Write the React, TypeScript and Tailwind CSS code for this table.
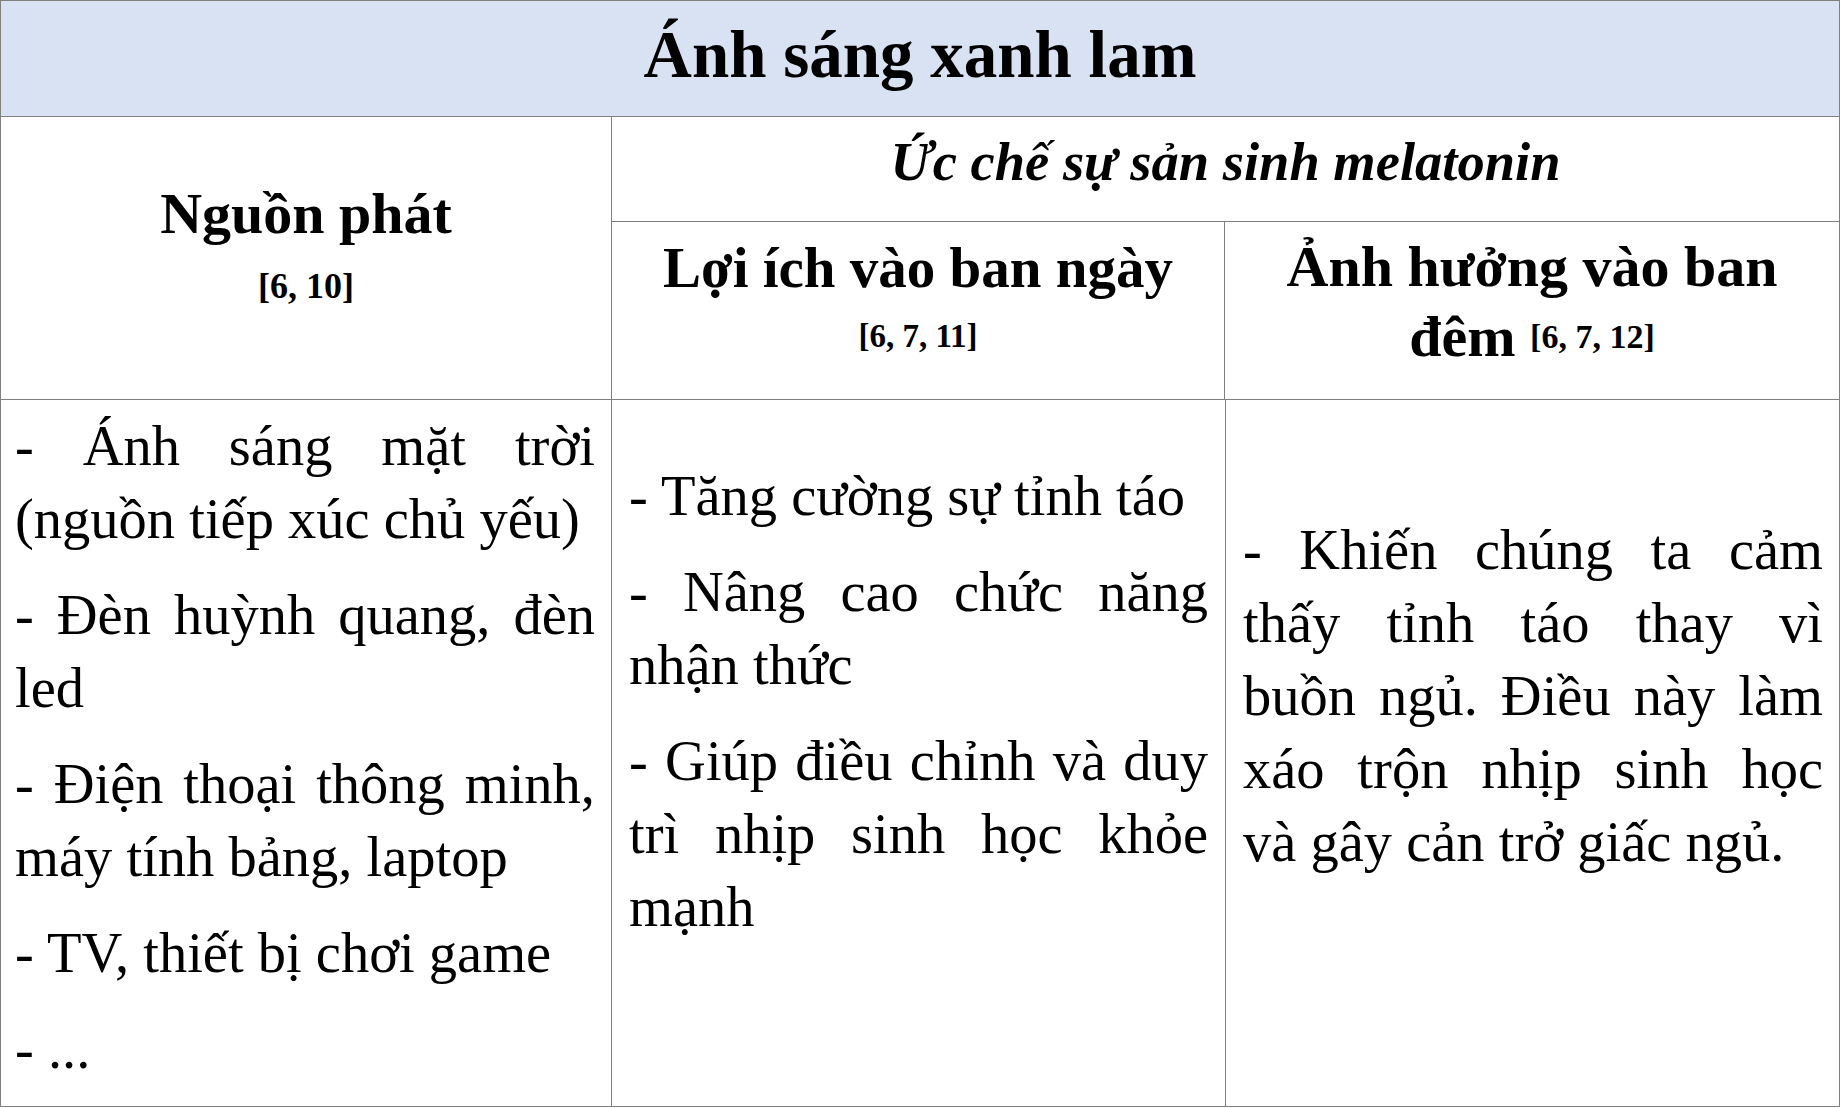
const serif = "font-['Liberation_Serif',serif]";

type Para = string[];

// each inner array is one paragraph; all lines but the last are stretched edge to edge
function Paragraphs({ items }: { items: Para[] }) {
  return (
    <div className="flex flex-col gap-[23px]">
      {items.map((lines, i) => (
        <p key={i} className="text-[56.5px] leading-[73px]">
          {lines.map((line, j) =>
            j < lines.length - 1 ? (
              <span key={j} className="block text-justify [text-align-last:justify]">
                {line}
              </span>
            ) : (
              <span key={j} className="block text-left">
                {line}
              </span>
            )
          )}
        </p>
      ))}
    </div>
  );
}

const sources: Para[] = [
  ["- Ánh sáng mặt trời", "(nguồn tiếp xúc chủ yếu)"],
  ["- Đèn huỳnh quang, đèn", "led"],
  ["- Điện thoại thông minh,", "máy tính bảng, laptop"],
  ["- TV, thiết bị chơi game"],
  ["- ..."],
];

const benefits: Para[] = [
  ["- Tăng cường sự tỉnh táo"],
  ["- Nâng cao chức năng", "nhận thức"],
  ["- Giúp điều chỉnh và duy", "trì nhịp sinh học khỏe", "mạnh"],
];

const effects: Para[] = [
  [
    "- Khiến chúng ta cảm",
    "thấy tỉnh táo thay vì",
    "buồn ngủ. Điều này làm",
    "xáo trộn nhịp sinh học",
    "và gây cản trở giấc ngủ.",
  ],
];

export default function App() {
  return (
    <div className={`w-[1840px] h-[1108px] bg-white text-black ${serif}`}>
      <div className="w-[1840px] h-[1107px] border border-[#7f7f7f] flex flex-col">
        {/* title row */}
        <div className="h-[116px] shrink-0 border-b border-[#7f7f7f] bg-[#d9e2f3] flex items-center justify-center pb-[8px]">
          <h1 className="text-[67px] leading-none font-bold">Ánh sáng xanh lam</h1>
        </div>

        {/* column headers */}
        <div className="h-[283px] shrink-0 border-b border-[#7f7f7f] flex">
          <div className="w-[611px] shrink-0 border-r border-[#7f7f7f] pt-[68px] flex flex-col items-center font-bold">
            <div className="text-[58px] leading-none">Nguồn phát</div>
            <div className="text-[36px] leading-none mt-[25px]">[6, 10]</div>
          </div>
          <div className="flex-1 flex flex-col">
            <div className="h-[105px] shrink-0 border-b border-[#7f7f7f] flex items-center justify-center pb-[13px]">
              <div className="text-[54.5px] leading-none font-bold italic">Ức chế sự sản sinh melatonin</div>
            </div>
            <div className="flex-1 flex">
              <div className="w-[613px] shrink-0 border-r border-[#7f7f7f] pt-[17px] flex flex-col items-center font-bold">
                <div className="text-[57px] leading-none">Lợi ích vào ban ngày</div>
                <div className="text-[33px] leading-none mt-[24px]">[6, 7, 11]</div>
              </div>
              <div className="flex-1 pt-[10px] text-center font-bold">
                <div className="text-[58px] leading-[70px]">
                  Ảnh hưởng vào ban
                  <br />
                  đêm <span className="text-[34px] [vertical-align:8px]">[6, 7, 12]</span>
                </div>
              </div>
            </div>
          </div>
        </div>

        {/* body */}
        <div className="flex-1 flex">
          <div className="w-[611px] shrink-0 border-r border-[#7f7f7f] pt-[10px] pl-[14px] pr-[16px]">
            <Paragraphs items={sources} />
          </div>
          <div className="w-[614px] shrink-0 border-r border-[#7f7f7f] pt-[60px] pl-[17px] pr-[17px]">
            <Paragraphs items={benefits} />
          </div>
          <div className="flex-1 pt-[114px] pl-[17px] pr-[16px]">
            <Paragraphs items={effects} />
          </div>
        </div>
      </div>
    </div>
  );
}
